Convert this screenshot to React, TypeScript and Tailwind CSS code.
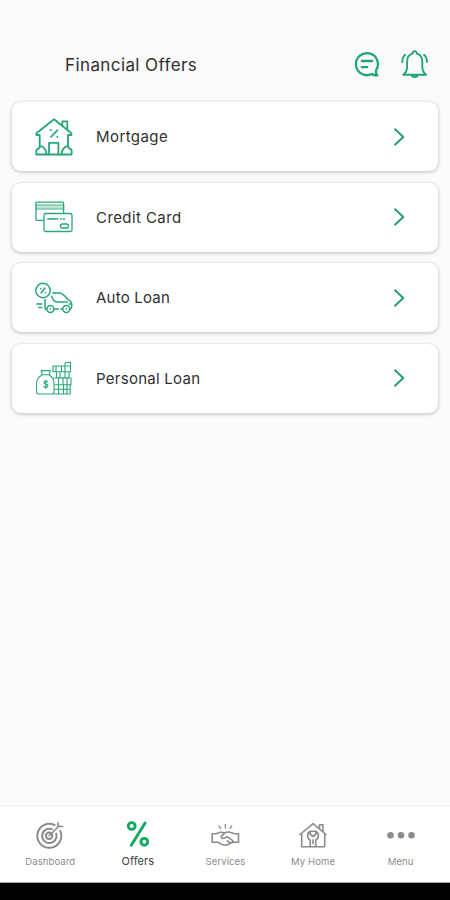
import type { ReactNode } from "react";

function Icon({ children, className, box = "0 0 40 40", width = 1.3 }: { children: ReactNode; className: string; box?: string; width?: number }) {
  return (
    <svg viewBox={box} className={className} fill="none" stroke="currentColor" strokeWidth={width} strokeLinecap="round" strokeLinejoin="round">
      {children}
    </svg>
  );
}

const mortgage = (
  <Icon className="size-10" width={1.8}>
    <path d="M5.7 29V18H2.4v-1.8L20 2.2l17.4 14V18H34v11M28.3 8.5V4.3h5v8.5" />
    <path d="M15 37.5V25.8h9.4v11.7M17 19.8l6.5-6.6M16.6 13.2h.3M23.2 19.8h.3" />
    <path d="M2.3 37.5h35.4v-3.2c0-1.8-1.3-2.7-2.6-2.7 0-2-2.7-2.8-4.2-1.5-1.8 1.6-3.4 3.4-3.4 7.4M2.3 37.5v-3.2c0-1.8 1.3-2.7 2.6-2.7 0-2 2.7-2.8 4.2-1.5 1.8 1.6 3.4 3.4 3.4 7.4" />
  </Icon>
);

const creditCard = (
  <Icon className="size-10" width={1.3}>
    <path d="M9 23.4H3.2A1.2 1.2 0 0 1 2 22.2V6.4a1.2 1.2 0 0 1 1.2-1.2h25.2a1.2 1.2 0 0 1 1.2 1.2v9.3" />
    <path d="M2 8h27.6M2 12h27.6" strokeWidth="0.9" />
    <path d="M2.5 10h26.6" strokeWidth="3" opacity=".3" />
    <rect x="10" y="16.5" width="28" height="18" rx="1.8" />
    <path d="M13.7 22h10M26.5 22h.8M29 22h1.5" />
    <rect x="26.5" y="27" width="8" height="4" rx="2" />
  </Icon>
);

const autoLoan = (
  <Icon className="size-10" width={1.5}>
    <circle cx="9" cy="12.5" r="7.2" />
    <path d="M7 15l4-5M6.5 10.7h.3M11.4 14.5h.3M18.7 15H25c4 0 6.2 3.3 9 6.6 2.4.9 3.8 2.1 3.8 5.4 0 2.5-.3 4-2 4M28.5 31h-1.7M24.5 31h-4.2M12.6 31H11v-9.5M17.7 18.2c.8 2.9 2.1 5.7 5 5.7h10.6M2.8 26h5M4.8 29.5h3M35 26h2.5" />
    <circle cx="16.4" cy="31" r="3.5" />
    <circle cx="32.3" cy="31" r="3.5" />
    <path d="M16.3 31h.2M32.2 31h.2" />
  </Icon>
);

const personalLoan = (
  <Icon className="size-10" width={1.1}>
    <path d="M8.5 16.8L7.2 12.6h9.2l-1.3 4.2M8.5 16.8h6.6c3 2 4.9 4.8 4.9 8.2v9c0 1.2-.7 2-2 2H4.4c-1.3 0-1.8-.8-1.8-2v-9c0-3.4 2.7-6.4 5.9-8.2z" />
    <path d="M13.7 23.8c-1-1.2-3.8-.9-3.8.8 0 2 4 1.1 4 3.2 0 1.9-3 2-4.2.6M11.8 22v8.5" />
    <path d="M19 8h12v5.7H19zM22 8v5.7M27.5 8v5.7M31 5l5.5-1v9.7H31zM31 8h5.5M22.5 13.7H35v6H22.5zM26 13.7v6M31 13.7v6M20 20h17v6.7H21M24.5 20v6.7M29 20v6.7M33 20v6.7M21 26.7h15.2V36H20.5M24.5 26.7V36M29.5 26.7V36M33 26.7V36M20.5 31.2h15.7" />
  </Icon>
);

const dashboard = (
  <Icon className="size-[30px]" box="0 0 30 30" width={2}>
    <path d="M19.7 5.1A12 12 0 1 0 25.3 11" />
    <path d="M17 9.2a7.2 7.2 0 1 0 4.2 4.4" />
    <circle cx="14.1" cy="15.7" r="3.2" />
    <path d="M14.1 15.7L24 6M23 6.5V2.8M23.5 6.5h4.2" strokeWidth="1.6" />
  </Icon>
);

const offers = (
  <Icon className="size-[30px]" box="0 0 30 30" width={2.9}>
    <path d="M8.3 25.2L22.1 3" />
    <circle cx="8.7" cy="6" r="3.4" />
    <circle cx="21.3" cy="21.8" r="3.4" />
  </Icon>
);

const services = (
  <Icon className="size-[30px]" box="0 0 30 30" width={1.6}>
    <path d="M6 13.8H2.2v8.4H6M24.8 13.8h3.7v8.4h-3.7M6 13.8l4.5-1.5c1.4-.4 2.7.2 4 .9M24.8 13.8l-5.8-1.7c-1.8-.4-3.1.1-4.5 1.1l-3.2 2.9c-.8 2.2 1.7 3.1 3.6 1.8l2-1.2 5.5 3.6c1.6 1.2.2 3-1.4 2.3M6 22.2h1.8l4 2.2c2.7 1.4 6 1.3 9.2-1.8l3.8-.4M17.2 20.8l3 2" />
    <path d="M15.4 4.5V8M9 5.8l1.6 2.7M21.7 5.8l-1.6 2.7" strokeWidth="1.3" />
  </Icon>
);

const myHome = (
  <Icon className="size-[30px]" box="0 0 30 30" width={1.6}>
    <path d="M3.7 14v12.8h23V14M2 14.5L15 3.6l13 10.9M21.5 8.7V4.8H25v7" />
    <path d="M12.2 11.3a5 5 0 0 0 0 8.8v6.4M17.8 11.3a5 5 0 0 1 0 8.8v6.4M12.2 11.3v3.2l2.8 2 2.8-2v-3.2M12.2 11.3h5.6M15 19.8v4" />
  </Icon>
);

const menu = (
  <svg viewBox="0 0 30 30" className="size-[30px]" fill="currentColor">
    <circle cx="4.5" cy="15.2" r="3.3" />
    <circle cx="15" cy="15.2" r="3.3" />
    <circle cx="25.5" cy="15.2" r="3.3" />
  </svg>
);

const rows = [
  { label: "Mortgage", icon: mortgage, spacing: "tracking-[0.42px]" },
  { label: "Credit Card", icon: creditCard, spacing: "tracking-[0.42px]" },
  { label: "Auto Loan", icon: autoLoan, spacing: "tracking-[0.22px]" },
  { label: "Personal Loan", icon: personalLoan, spacing: "tracking-[0.27px]" },
];

const tabs = [
  { label: "Dashboard", icon: dashboard },
  { label: "Offers", icon: offers, active: true },
  { label: "Services", icon: services },
  { label: "My Home", icon: myHome },
  { label: "Menu", icon: menu },
];

export default function App() {
  return (
    <div className="flex h-[900px] w-[450px] flex-col overflow-hidden bg-[#fafafa] font-['Inter','Liberation_Sans',sans-serif] text-[#303030]">
      <header className="flex h-[102px] items-center pt-[27px] pr-[21px] pl-[65px]">
        <h1 className="flex-1 text-[17px] leading-6 tracking-[0.4px]">Financial Offers</h1>
        <div className="flex items-center gap-[18px] text-[#21a673]">
          <Icon className="size-[30px]" box="0 0 30 30" width={2.3}>
            <path d="M25.1 20.2A11 11 0 1 0 20.8 24c1.6 1.2 3.1 1.6 5.5 1.3-1.4-1-1.6-3-1.2-5.1zM10.8 11h10.4M10.8 17.2h5.4" />
          </Icon>
          <Icon className="size-[30px]" box="0 0 30 30" width={1.9}>
            <path d="M4.3 24.8h22.8c-3-2.4-3.8-4.5-3.8-8.3v-5c0-4.2-2.7-7-5.4-7.8 0-3.4-4.4-3.4-4.4 0-3 .8-5.4 3.6-5.4 7.8v5c0 3.8-.8 5.9-3.8 8.3zM12.7 25.2c.6 2.4 5.4 2.4 6 0M6.2 4.7C4.2 6.2 3.4 8.7 3.2 12M25 4.7c2 1.5 2.8 4 3 7.3" />
          </Icon>
        </div>
      </header>
      <main className="flex flex-1 flex-col gap-[11.5px] px-3">
        {rows.map((row) => (
          <button key={row.label} className="flex h-[69px] shrink-0 items-center rounded-[9px] bg-white pr-[29px] pl-[22px] text-left shadow-[0_1px_3px_1px_rgba(0,0,0,0.16)]">
            <span className="text-[#29a777]">{row.icon}</span>
            <span className={`ml-[22px] flex-1 pt-px text-[15px] leading-5 ${row.spacing}`}>{row.label}</span>
            <Icon className="size-5" box="0 0 20 20" width={1.9}>
              <path d="M6 2.3l8.3 7.7L6 17.7" stroke="#259b70" />
            </Icon>
          </button>
        ))}
      </main>
      <nav className="flex h-[76px] border-b border-[#aaa] bg-white px-1.5 pt-[13px] shadow-[0_-1px_2px_rgba(0,0,0,0.03)]">
        {tabs.map((tab) => (
          <button key={tab.label} className="flex flex-1 flex-col items-center pl-px">
            <span className={tab.active ? "text-[#0fa95f]" : "text-[#8b8b8b]"}>{tab.icon}</span>
            <span className={`leading-[14px] whitespace-nowrap ${tab.active ? "mt-1 text-[11px] tracking-[0.1px] text-[#404040]" : "mt-[5px] text-[9.5px] tracking-[0.1px] text-[#8b8b8b]"}`}>{tab.label}</span>
          </button>
        ))}
      </nav>
      <div className="h-[17px] bg-black" />
    </div>
  );
}
